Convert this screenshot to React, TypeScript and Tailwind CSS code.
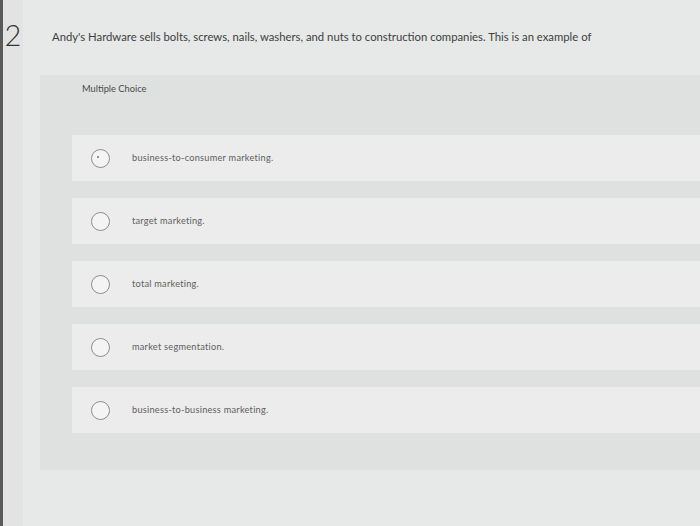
import React from 'react';

const options = [
    'business-to-consumer marketing.',
    'target marketing.',
    'total marketing.',
    'market segmentation.',
    'business-to-business marketing.'
];

const Radio = ({ marked }: { marked?: boolean }) => (
    <div className="relative w-[19px] h-[19px] shrink-0 rounded-full border-[1.5px] border-[#8d8d8d] bg-[#f4f4f4]">
        {marked && <span className="absolute left-[5px] top-[6px] w-[2px] h-[2px] rounded-full bg-[#777]" />}
    </div>
);

const App: React.FC = () => {
    return (
        <div
            className="w-[700px] h-[526px] flex overflow-hidden bg-[#e7e8e8] border-l-[3px] border-[#5a5a5a]"
            style={{ fontFamily: 'Lato, "Open Sans", sans-serif' }}
        >
            {/* question number column */}
            <div className="w-[20px] shrink-0 bg-[#e3e3e3] flex justify-center items-start pt-[20px]">
                <span className="text-[29px] leading-none font-light text-[#333]">2</span>
            </div>

            <div className="flex-1 flex flex-col pl-[17px] pt-[30px]">
                <p className="ml-[12px] text-[11.3px] leading-[14px] text-[#404040]">
                    Andy's Hardware sells bolts, screws, nails, washers, and nuts to construction companies. This is an example of
                </p>

                {/* Multiple choice panel */}
                <div className="mt-[31px] h-[395px] bg-[#dfe0e0] flex flex-col pl-[32px] pb-[36px]">
                    <div className="h-[60px] pt-[8px] -ml-[32px] pl-[42px] flex items-start">
                        <span className="text-[9.3px] leading-[12px] text-[#4a4a4a]">Multiple Choice</span>
                    </div>
                    <div className="flex flex-col gap-[17px]">
                        {options.map((opt, i) => (
                            <div key={opt} className="h-[46px] bg-[#ececec] flex items-center pl-[19px] gap-[22px]">
                                <Radio marked={i === 0} />
                                <span className="text-[9.2px] text-[#606060] tracking-[0.25px]">{opt}</span>
                            </div>
                        ))}
                    </div>
                </div>
            </div>
        </div>
    );
};

export default App;
